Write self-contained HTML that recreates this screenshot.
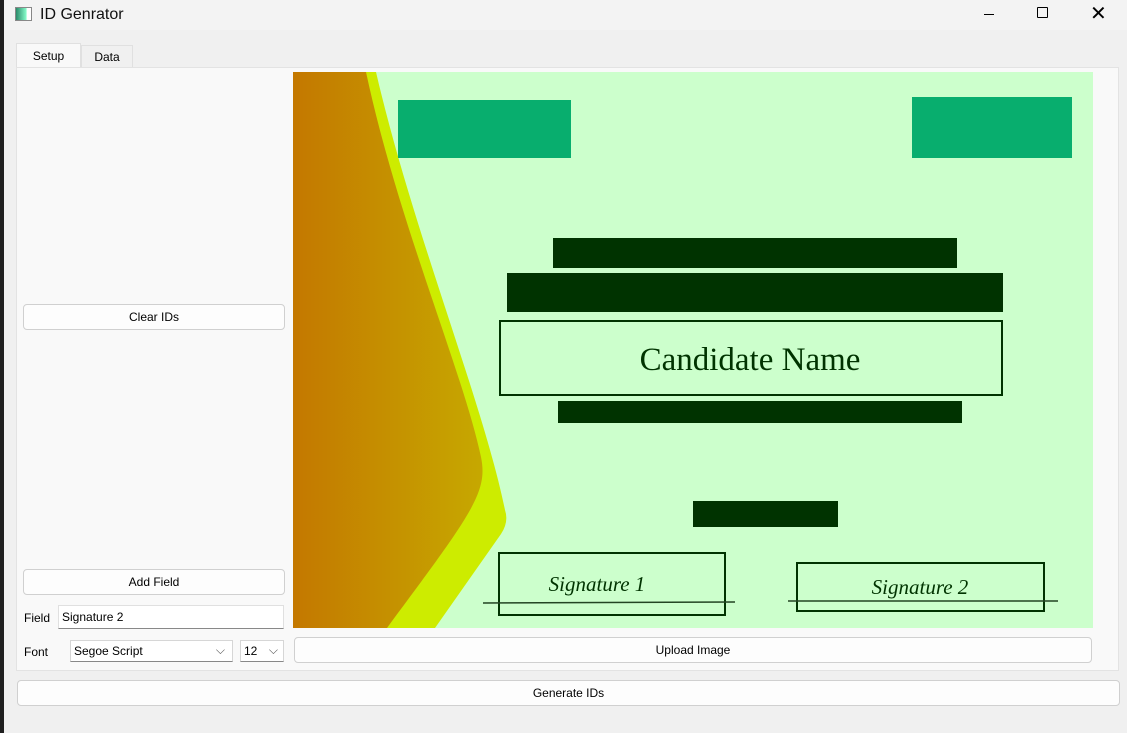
<!DOCTYPE html>
<html><head><meta charset="utf-8"><style>
*{box-sizing:border-box;margin:0;padding:0}
body{width:1127px;height:733px;background:#f0f0f0;font-family:"Liberation Sans",sans-serif;font-size:12px;color:#000;position:relative;overflow:hidden}
.abs{position:absolute}
.btn{position:absolute;background:#fdfdfd;border:1px solid #d0d0d0;border-radius:4px;text-align:center;line-height:25px;font-size:12px}
.inp{position:absolute;background:#fff;border:1px solid #e0e0e0;border-bottom:1px solid #888;padding-left:3px;line-height:22px;font-size:12px}
</style></head><body>
<div class="abs" style="left:0;top:0;width:4px;height:733px;background:#1f1f1f"></div>
<div class="abs" style="left:4px;top:0;width:1123px;height:30px;background:#f3f3f3"></div>
<div class="abs" style="left:15px;top:7px;width:17px;height:14px;border:1px solid #888;background:linear-gradient(90deg,#2a8a6a,#8fc 70%,#fff 72%)"></div>
<div class="abs" style="left:40px;top:6px;font-size:16px;color:#111">ID Genrator</div>
<div class="abs" style="left:984px;top:14px;width:10px;height:1px;background:#000"></div>
<div class="abs" style="left:1037px;top:7px;width:11px;height:11px;border:1.3px solid #000;border-radius:1px"></div>
<div class="abs" style="left:1090px;top:1px;font-size:20px;font-weight:300">✕</div>
<div class="abs" style="left:16px;top:43px;width:65px;height:25px;background:#f9f9f9;border:1px solid #e0e0e0;border-bottom:none;text-align:center;line-height:24px">Setup</div>
<div class="abs" style="left:81px;top:45px;width:52px;height:22px;background:#f0f0f0;border:1px solid #e0e0e0;border-bottom:none;text-align:center;line-height:22px">Data</div>
<div class="abs" style="left:16px;top:67px;width:1103px;height:604px;background:#f9f9f9;border:1px solid #e3e3e3"></div>
<div class="btn" style="left:23px;top:304px;width:262px;height:26px">Clear IDs</div>
<div class="btn" style="left:23px;top:569px;width:262px;height:26px">Add Field</div>
<div class="abs" style="left:24px;top:611px">Field</div>
<div class="inp" style="left:58px;top:605px;width:226px;height:24px">Signature 2</div>
<div class="abs" style="left:24px;top:645px">Font</div>
<div class="inp" style="left:70px;top:640px;width:163px;height:22px;border:1px solid #d6d6d6;border-bottom:1px solid #888;line-height:21px">Segoe Script<span style="position:absolute;right:7px;top:-1px;color:#555">⌵</span></div>
<div class="inp" style="left:240px;top:640px;width:44px;height:22px;border:1px solid #d6d6d6;border-bottom:1px solid #888;line-height:21px">12<span style="position:absolute;right:5px;top:-1px;color:#555">⌵</span></div>
<div class="btn" style="left:294px;top:637px;width:798px;height:26px">Upload Image</div>
<div class="btn" style="left:17px;top:680px;width:1103px;height:26px">Generate IDs</div>
<svg class="abs" style="left:293px;top:72px" width="800" height="556" viewBox="0 0 800 556">
<defs><linearGradient id="g" x1="0" x2="1"><stop offset="0" stop-color="#c47800"/><stop offset="1" stop-color="#c6a800"/></linearGradient></defs>
<rect width="800" height="556" fill="#ccffcc"/>
<path d="M0 0 H83 C120 160 190 330 212 438 Q216 450 208 462 L142 556 H0Z" fill="#cdec00"/>
<path d="M0 0 H73 C105 150 170 300 188 385 C195 420 180 440 94 556 H0Z" fill="url(#g)"/>
<rect x="105" y="28" width="173" height="58" fill="#08ae6e"/>
<rect x="619" y="25" width="160" height="61" fill="#08ae6e"/>
<rect x="260" y="166" width="404" height="30" fill="#003300"/>
<rect x="214" y="201" width="496" height="39" fill="#003300"/>
<rect x="207" y="249" width="502" height="74" fill="none" stroke="#003300" stroke-width="2"/>
<text x="457" y="298" text-anchor="middle" font-family="Liberation Serif,serif" font-size="33" fill="#003300">Candidate Name</text>
<rect x="265" y="329" width="404" height="22" fill="#003300"/>
<rect x="400" y="429" width="145" height="26" fill="#003300"/>
<rect x="206" y="481" width="226" height="62" fill="none" stroke="#003300" stroke-width="2"/>
<line x1="190" y1="531" x2="442" y2="530" stroke="#224422" stroke-width="1.5"/>
<text x="304" y="519" text-anchor="middle" font-family="Liberation Serif,serif" font-style="italic" font-size="21" fill="#003300">Signature 1</text>
<rect x="504" y="491" width="247" height="48" fill="none" stroke="#003300" stroke-width="2"/>
<line x1="495" y1="529" x2="765" y2="529" stroke="#224422" stroke-width="1.5"/>
<text x="627" y="522" text-anchor="middle" font-family="Liberation Serif,serif" font-style="italic" font-size="21" fill="#003300">Signature 2</text>
</svg>
</body></html>
